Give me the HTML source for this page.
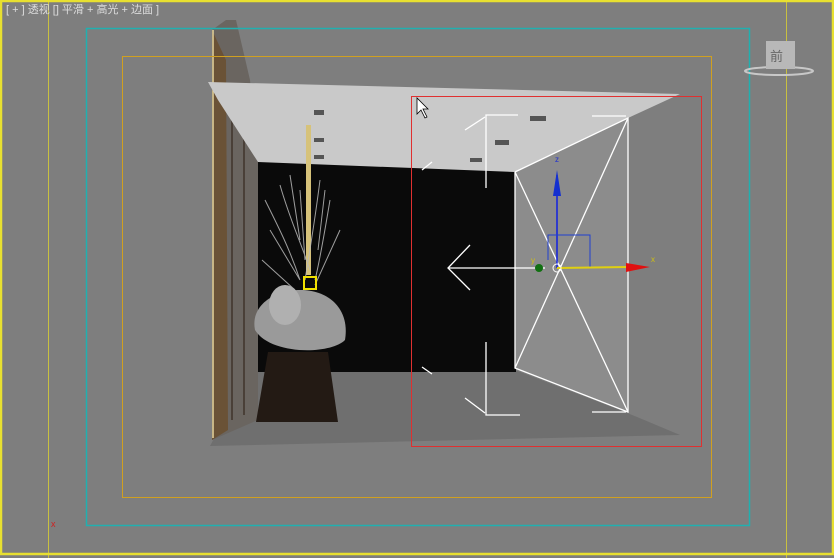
<!DOCTYPE html>
<html><head><meta charset="utf-8"><style>
body{margin:0;width:834px;height:558px;overflow:hidden;background:#7f7f7f}
svg{display:block}
</style></head><body>
<svg width="834" height="558" xmlns="http://www.w3.org/2000/svg">
<rect width="834" height="558" fill="#7e7e7e"/>
<!-- floor -->
<polygon points="250,372 515,370 625,412 680,435 210,446" fill="#6f6f6f"/>
<!-- back wall -->
<rect x="258" y="160" width="258" height="212" fill="#0a0a0a"/>
<!-- right wall -->
<polygon points="515,172 628,118 628,412 515,368" fill="#8c8c8c"/>
<!-- left wall -->
<polygon points="212,30 226,20 236,20 250,80 258,160 258,420 212,440" fill="#6a6560"/>
<polygon points="212,30 226,60 228,430 212,440" fill="#6a5236"/>
<g stroke="#4a4038" stroke-width="2">
<line x1="232" y1="120" x2="232" y2="420"/><line x1="244" y1="130" x2="244" y2="415"/>
</g>
<line x1="213" y1="30" x2="213" y2="438" stroke="#e8d8a0" stroke-width="1.5"/>
<!-- ceiling -->
<polygon points="208,82 680,94 628,118 515,172 258,162 218,100" fill="#c9c9c9"/>
<rect x="314" y="110" width="10" height="5" fill="#555"/>
<rect x="314" y="138" width="10" height="4" fill="#555"/>
<rect x="314" y="155" width="10" height="4" fill="#555"/>
<rect x="530" y="116" width="16" height="5" fill="#555"/>
<rect x="495" y="140" width="14" height="5" fill="#555"/>
<rect x="470" y="158" width="12" height="4" fill="#555"/>
<!-- plant -->
<rect x="306" y="125" width="5" height="150" fill="#d6c27a"/>
<g stroke="#b8b8b8" stroke-width="1" fill="none" opacity="0.85">
<path d="M265,200 C280,230 290,250 300,280 M320,180 C315,220 310,250 305,280 M280,185 C290,220 300,240 310,270 M330,200 C325,230 320,260 315,280 M270,230 L300,280 M340,230 L315,285 M262,260 L295,290 M300,190 L305,260 M290,175 L300,240 M325,190 L318,250"/>
</g>
<path d="M255,330 C250,305 275,290 300,290 C330,290 350,310 345,340 C330,355 270,355 255,330Z" fill="#9a9a9a"/>
<ellipse cx="285" cy="305" rx="16" ry="20" fill="#b0b0b0"/>
<rect x="304" y="277" width="12" height="12" fill="none" stroke="#f0e000" stroke-width="2"/>
<polygon points="268,352 328,352 338,422 256,422" fill="#231a14"/>
<!-- light gizmo -->
<g stroke="#fff" stroke-width="1.3" fill="none">
<polyline points="515,172 628,118 628,412 515,368 515,172"/>
<line x1="515" y1="172" x2="628" y2="412"/><line x1="515" y1="368" x2="628" y2="118"/>
<polyline points="518,115 486,115 486,188"/><polyline points="486,342 486,415 520,415"/>
<polyline points="592,116 626,116"/><polyline points="592,412 626,412"/>
<line x1="448" y1="268" x2="545" y2="268"/>
<polyline points="470,245 448,268 470,290"/>
<line x1="465" y1="130" x2="485" y2="117"/><line x1="422" y1="170" x2="432" y2="162"/>
<line x1="422" y1="367" x2="432" y2="374"/><line x1="465" y1="398" x2="485" y2="413"/>
</g>
<line x1="557" y1="268" x2="557" y2="175" stroke="#1020e0" stroke-width="1.5"/>
<polygon points="557,170 553,196 561,196" fill="#1430d0"/>
<polyline points="548,260 548,235 590,235 590,268" stroke="#2040d0" fill="none"/>
<line x1="557" y1="268" x2="628" y2="267" stroke="#e0d010" stroke-width="2"/>
<polygon points="626,263 650,267 626,272" fill="#e01010"/>
<circle cx="539" cy="268" r="4" fill="#107010"/>
<circle cx="557" cy="268" r="4" fill="none" stroke="#fff"/>
<text x="555" y="162" fill="#2030d0" font-size="8" font-family="Liberation Sans">z</text>
<text x="651" y="262" fill="#d0c010" font-size="8" font-family="Liberation Sans">x</text>
<text x="531" y="263" fill="#d0c010" font-size="8" font-family="Liberation Sans">y</text>
<!-- selection rect -->
<rect x="411.5" y="96.5" width="290" height="350" fill="none" stroke="#e03030" stroke-width="1"/>
<!-- cursor -->
<polygon points="417,98 417,114 421,110 425,118 427,117 423,109 428,109" fill="#fff" stroke="#000" stroke-width="0.8"/>
<!-- safe frames -->
<line x1="48.5" y1="0" x2="48.5" y2="558" stroke="#c8c040" stroke-width="1"/>
<line x1="786.5" y1="0" x2="786.5" y2="558" stroke="#c8c040" stroke-width="1"/>
<rect x="86.5" y="28.5" width="663" height="497" fill="none" stroke="#20b0b0" stroke-width="1.5"/>
<rect x="122.5" y="56.5" width="589" height="441" fill="none" stroke="#d0a020" stroke-width="1"/>
<!-- viewcube -->
<ellipse cx="779" cy="71" rx="34" ry="4" fill="none" stroke="#c8c8c8" stroke-width="2"/>
<rect x="766" y="41" width="29" height="28" fill="#b8b8b8"/>
<text x="770" y="61" fill="#666" font-size="13" font-family="Liberation Sans,'Noto Sans CJK SC',sans-serif">前</text>
<text x="51" y="527" fill="#d02020" font-size="9" font-family="Liberation Sans">x</text>
<!-- border -->
<rect x="1" y="1" width="832" height="553" fill="none" stroke="#e8e030" stroke-width="2.5"/>
<text x="6" y="13" fill="#dcdcdc" font-size="11" font-family="Liberation Sans,'Noto Sans CJK SC',sans-serif">[ + ] 透视 [] 平滑 + 高光 + 边面 ]</text>
</svg>
</body></html>
